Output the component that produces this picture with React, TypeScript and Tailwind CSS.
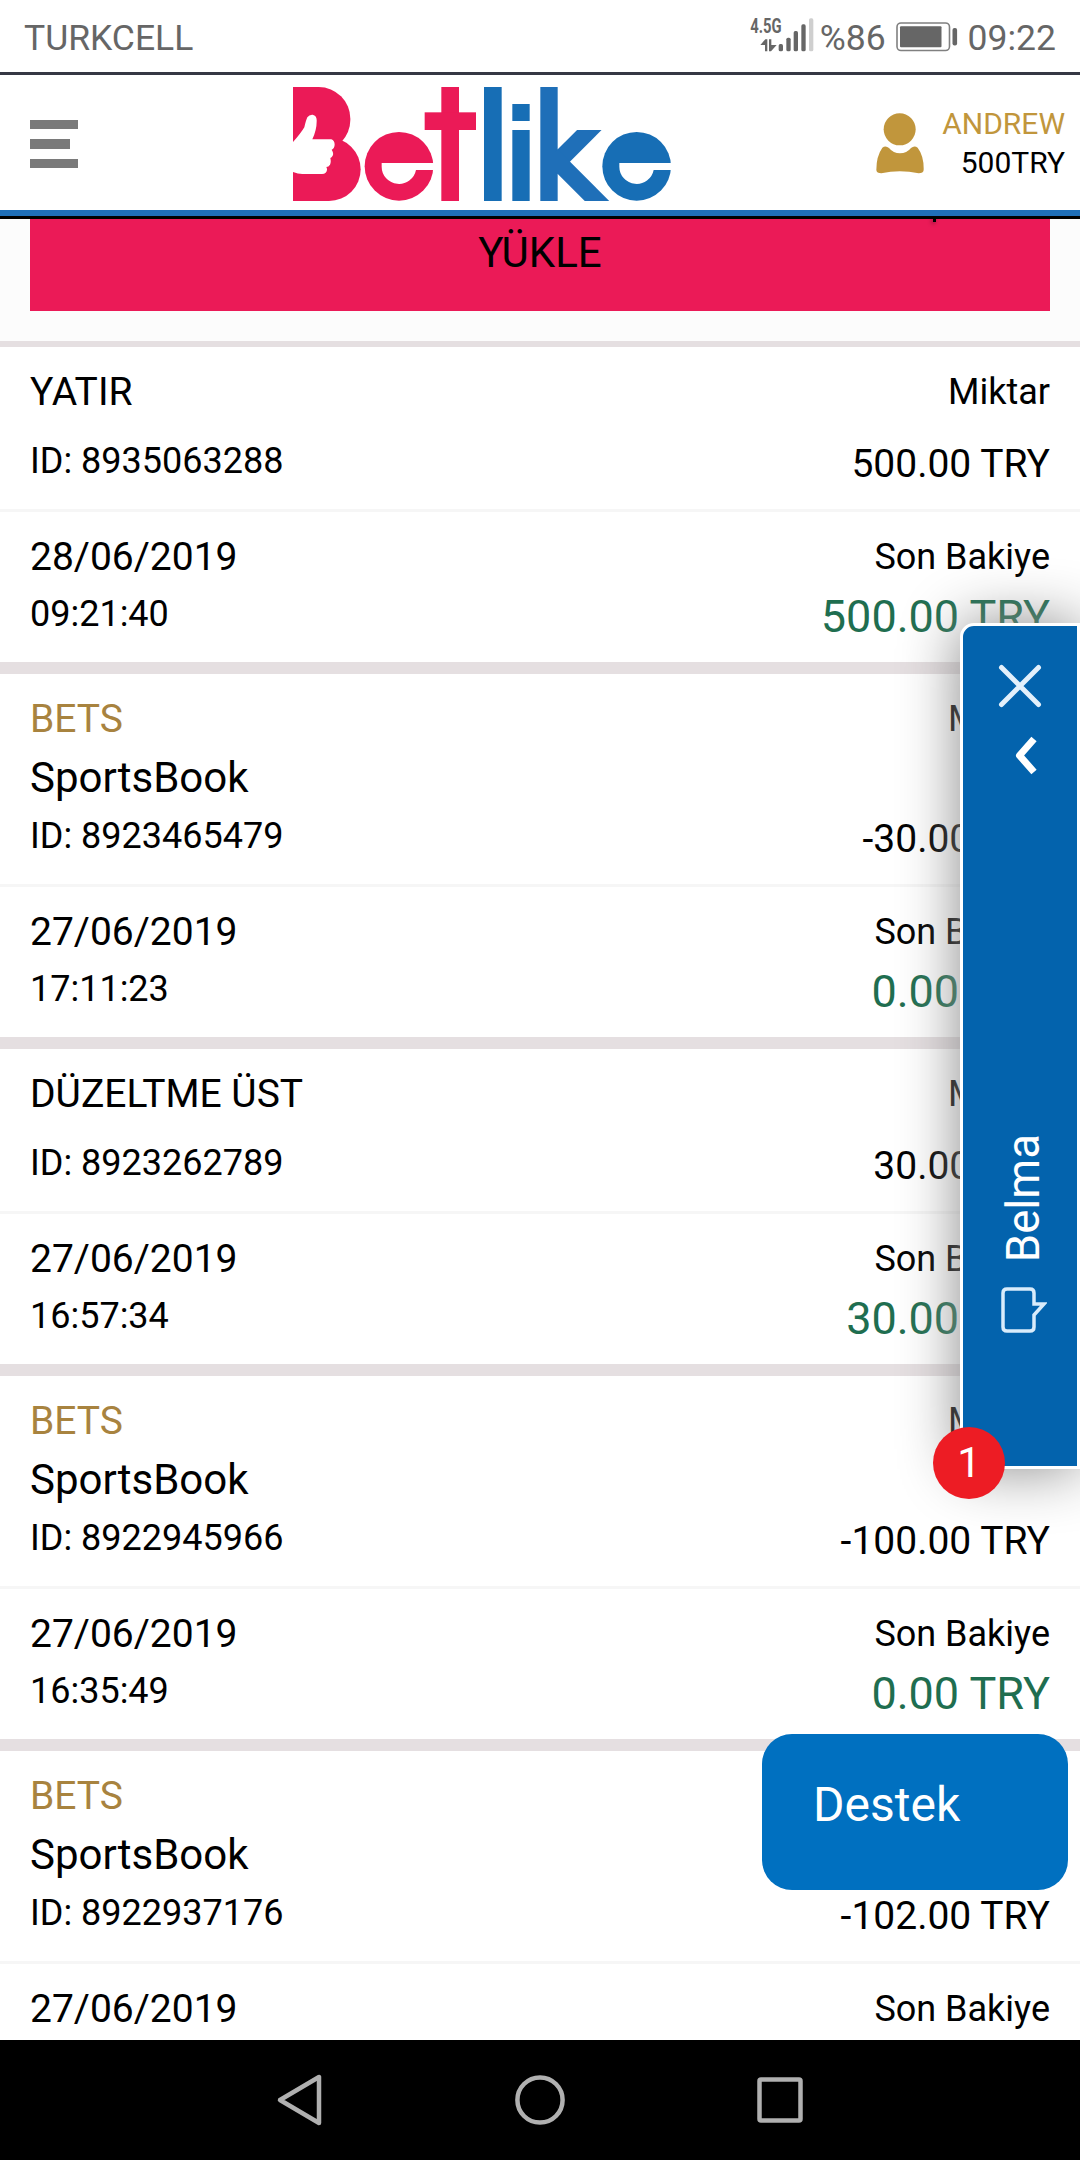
// App.tsx
type Transaction = {
  id: string;
  type: string;
  game?: string;
  amount: string;
  date: string;
  time: string;
  balance: string;
};

const transactions: Transaction[] = [
  { id: "8935063288", type: "YATIR", amount: "500.00", date: "28/06/2019", time: "09:21:40", balance: "500.00" },
  { id: "8923465479", type: "BETS", game: "SportsBook", amount: "-30.00", date: "27/06/2019", time: "17:11:23", balance: "0.00" },
  { id: "8923262789", type: "DÜZELTME ÜST", amount: "30.00", date: "27/06/2019", time: "16:57:34", balance: "30.00" },
  { id: "8922945966", type: "BETS", game: "SportsBook", amount: "-100.00", date: "27/06/2019", time: "16:35:49", balance: "0.00" },
  { id: "8922937176", type: "BETS", game: "SportsBook", amount: "-102.00", date: "27/06/2019", time: "", balance: "" },
];

function StatusBar() {
  return (
    <div className="flex h-[75px] shrink-0 items-center justify-between border-b-[3px] border-[#353844] bg-white px-6 text-[35.5px] text-[#666]">
      <span className="pt-1.5">TURKCELL</span>
      <div className="flex items-center">
        <svg width="64" height="36" viewBox="92 56 192 108" className="mr-1.5 overflow-visible" fill="#666">
          <text x="93" y="101" fontSize="60" fontWeight="700" textLength="94" lengthAdjust="spacingAndGlyphs">4.5G</text>
          <path d="M123 137l15-17h6v36h-7v-19zM149 120h7v17h16l-17 19h-6z" />
          <rect x="178" y="134" width="13" height="22" rx="5" />
          <rect x="201" y="115" width="13" height="41" rx="5" />
          <rect x="223" y="95" width="13" height="61" rx="5" />
          <rect x="246" y="75" width="13" height="81" rx="5" />
          <rect x="269" y="57" width="13" height="99" rx="5" fill="#cfcfcf" />
        </svg>
        <span className="pt-1.5">%86</span>
        <svg width="62" height="30" viewBox="0 0 62 30" className="mt-0.5 mr-2.5 ml-2.5">
          <rect x="1" y="1" width="52.5" height="27.5" rx="4" fill="none" stroke="#808080" strokeWidth="1.6" />
          <rect x="4" y="4.2" width="41.5" height="21" rx="1" fill="#666" />
          <rect x="56.5" y="6" width="4.6" height="17.5" rx="2" fill="#666" />
        </svg>
        <span className="pt-1.5">09:22</span>
      </div>
    </div>
  );
}

function Logo() {
  return (
    <svg width="378" height="114" viewBox="69 51 1134 342" role="img" aria-label="Betlike">
      <g fill="#eb1a57">
        <rect x="-40" y="51" width="281" height="194" rx="95" />
        <rect x="-40" y="203" width="312" height="190" rx="95" />
        <circle cx="387" cy="289" r="103" />
        <rect x="514" y="51" width="53" height="342" />
        <rect x="464" y="127" width="154" height="53" />
      </g>
      <path
        d="M60 226Q90 194 103 172Q108 150 112 142Q118 133 128 134Q140 137 140 150Q141 178 127 208H184Q194 212 194 224Q193 236 185 239Q192 250 188 257Q185 263 181 264Q184 276 180 284Q176 291 169 291Q174 300 167 308Q163 312 156 312H97Q80 311 60 302Z"
        fill="#fff"
      />
      <g fill="#176eb5">
        <rect x="642" y="51" width="53" height="342" />
        <rect x="727" y="102" width="52" height="51" />
        <rect x="727" y="180" width="52" height="213" />
        <rect x="811" y="51" width="52" height="342" fill="#1f6fb8" />
        <circle cx="1100" cy="289" r="103" />
      </g>
      <clipPath id="arms">
        <rect x="855" y="180" width="170" height="213" />
      </clipPath>
      <g clipPath="url(#arms)" stroke="#1f6fb8" strokeWidth="52">
        <path d="M844.5 293.5L1000 138" />
        <path d="M844.5 256.5L1020 432" />
      </g>
      <path d="M335 279H495V300H438A52 52 0 0 1 335 290Z" fill="#fff" />
      <path d="M1048 279H1208V300H1151A52 52 0 0 1 1048 290Z" fill="#fff" />
    </svg>
  );
}

function Header() {
  return (
    <header className="flex h-36 shrink-0 border-b-[3px] border-black bg-white">
      <div className="flex w-full border-b-[6px] border-[#1f6fb8] pr-[15px] pl-[30px]">
        <div className="mt-[45px] flex w-12 flex-col gap-2.5">
          <span className="h-[9px] bg-[#7a7a7a]" />
          <span className="h-[9.5px] w-10 bg-[#7a7a7a]" />
          <span className="h-[9px] bg-[#7a7a7a]" />
        </div>
        <div className="mt-3 mr-auto ml-[215px]">
          <Logo />
        </div>
        <div className="flex">
          <svg width="48" height="61" viewBox="469 341 144 183" className="mt-[38px] mr-[18px]" fill="#c1963c">
            <circle cx="540" cy="390" r="48" />
            <path d="M488 445Q498 437 508 446Q521 462 541 462Q561 462 574 446Q584 437 594 445Q613 470 612 512Q611 522 597 522Q540 510 485 522Q471 522 470 512Q470 470 488 445Z" />
          </svg>
          <div className="flex flex-col pt-[29px] text-right text-[30px] leading-[39px]">
            <span className="text-[#c1963c]">ANDREW</span>
            <span>500TRY</span>
          </div>
        </div>
      </div>
    </header>
  );
}

function TransactionCard({ tx }: { tx: Transaction }) {
  return (
    <section className="mb-3 bg-white">
      <div className={`flex justify-between border-b-[3px] border-[#f6f6f6] px-[30px] pt-[15px] ${tx.game ? "h-[213px]" : "h-[165px]"}`}>
        <div className="flex flex-col pb-[21px]">
          <span className={`text-[39px] leading-[60px] ${tx.game ? "text-[#a8833f]" : ""}`}>{tx.type}</span>
          {tx.game && <span className="text-[42px] leading-[58px]">{tx.game}</span>}
          <span className="mt-auto text-[36px] leading-[54px]">ID: {tx.id}</span>
        </div>
        <div className="flex flex-col justify-between pb-[18px] text-right">
          <span className="text-[36px] leading-[61px]">Miktar</span>
          <span className="text-[39px] leading-[54px]">{tx.amount} TRY</span>
        </div>
      </div>
      <div className="flex h-[150px] justify-between px-[30px] pt-[15px]">
        <div className="flex flex-col">
          <span className="text-[39px] leading-[60px]">{tx.date}</span>
          {tx.time && <span className="text-[36px] leading-[55px]">{tx.time}</span>}
        </div>
        <div className="flex flex-col text-right">
          <span className="text-[36px] leading-[61px]">Son Bakiye</span>
          {tx.balance && <span className="text-[45px] leading-[58px] text-[#1f6e50]">{tx.balance} TRY</span>}
        </div>
      </div>
    </section>
  );
}

function ChatWidget() {
  return (
    <div className="absolute top-[623px] right-0 h-[846px] w-[120px] rounded-tl-[14px] border-[3px] border-white bg-[#0363ad] shadow-[0_0_60px_#888]">
      <div className="flex h-full flex-col items-center">
        <svg width="44" height="44" viewBox="0 0 44 44" className="mt-[38px]" stroke="#e3f0fb" strokeWidth="5" strokeLinecap="round">
          <path d="M3.5 3.5L40.5 40.5M40.5 3.5L3.5 40.5" />
        </svg>
        <svg width="24" height="40" viewBox="0 0 24 40" className="mt-7 ml-[12px]" fill="none" stroke="#fff" strokeWidth="7" strokeLinejoin="round">
          <path d="M20 3L5.5 19.5L20 36" />
        </svg>
        <span className="mt-[358px] ml-[7px] rotate-180 text-[45.5px] leading-[52px] text-white [writing-mode:vertical-rl]">Belma</span>
        <svg width="46" height="46" viewBox="0 0 46 46" className="mt-[25px] ml-2" fill="none" stroke="#d9ecfb" strokeWidth="3.5">
          <path d="M6 2H29Q33 2 33 6V17H43L33 28V40Q33 44 29 44H6Q2 44 2 40V6Q2 2 6 2Z" />
        </svg>
      </div>
      <span className="absolute top-[801px] -left-[30px] flex h-[72px] w-[72px] items-center justify-center rounded-full bg-[#ed1c24] text-[42px] leading-none text-white">1</span>
    </div>
  );
}

function NavBar() {
  return (
    <nav className="flex h-[120px] shrink-0 items-center justify-between bg-black px-[275px]">
      <svg width="50" height="54" viewBox="0 0 50 54" fill="none" stroke="#b0b0b0" strokeWidth="4.5" strokeLinejoin="round">
        <path d="M5 27L44 4V50Z" />
      </svg>
      <svg width="54" height="54" viewBox="0 0 54 54" fill="none" stroke="#b0b0b0" strokeWidth="4.5">
        <circle cx="27" cy="27" r="22.6" />
      </svg>
      <svg width="50" height="50" viewBox="0 0 50 50" fill="none" stroke="#b0b0b0" strokeWidth="4.5">
        <rect x="4.5" y="4.5" width="41" height="41" rx="1.5" />
      </svg>
    </nav>
  );
}

export default function App() {
  return (
    <div className="relative flex h-[2160px] w-[1080px] flex-col overflow-hidden bg-white font-[Roboto,sans-serif] text-black">
      <StatusBar />
      <Header />
      <main className="min-h-0 flex-1 overflow-hidden bg-[#e5dfe1]">
        <div className="mb-1.5 h-[122px] bg-[#fcfcfc] px-[30px]">
          <button className="relative block h-[92px] w-full bg-[#eb1a57] pb-[25px] text-[42px] leading-[67px]">
            YÜKLE
            <span className="absolute top-0 left-[903px] h-[3px] w-[3px] bg-black shadow-[-1px_1px_4px_rgba(0,0,0,0.6)]" />
          </button>
        </div>
        {transactions.map((tx) => (
          <TransactionCard key={tx.id} tx={tx} />
        ))}
      </main>
      <NavBar />
      <ChatWidget />
      <button className="absolute top-[1734px] left-[762px] h-[156px] w-[306px] rounded-[30px] bg-[#0070c0] pb-3.5 pl-[51px] text-left text-[48px] text-white">
        Destek
      </button>
    </div>
  );
}
